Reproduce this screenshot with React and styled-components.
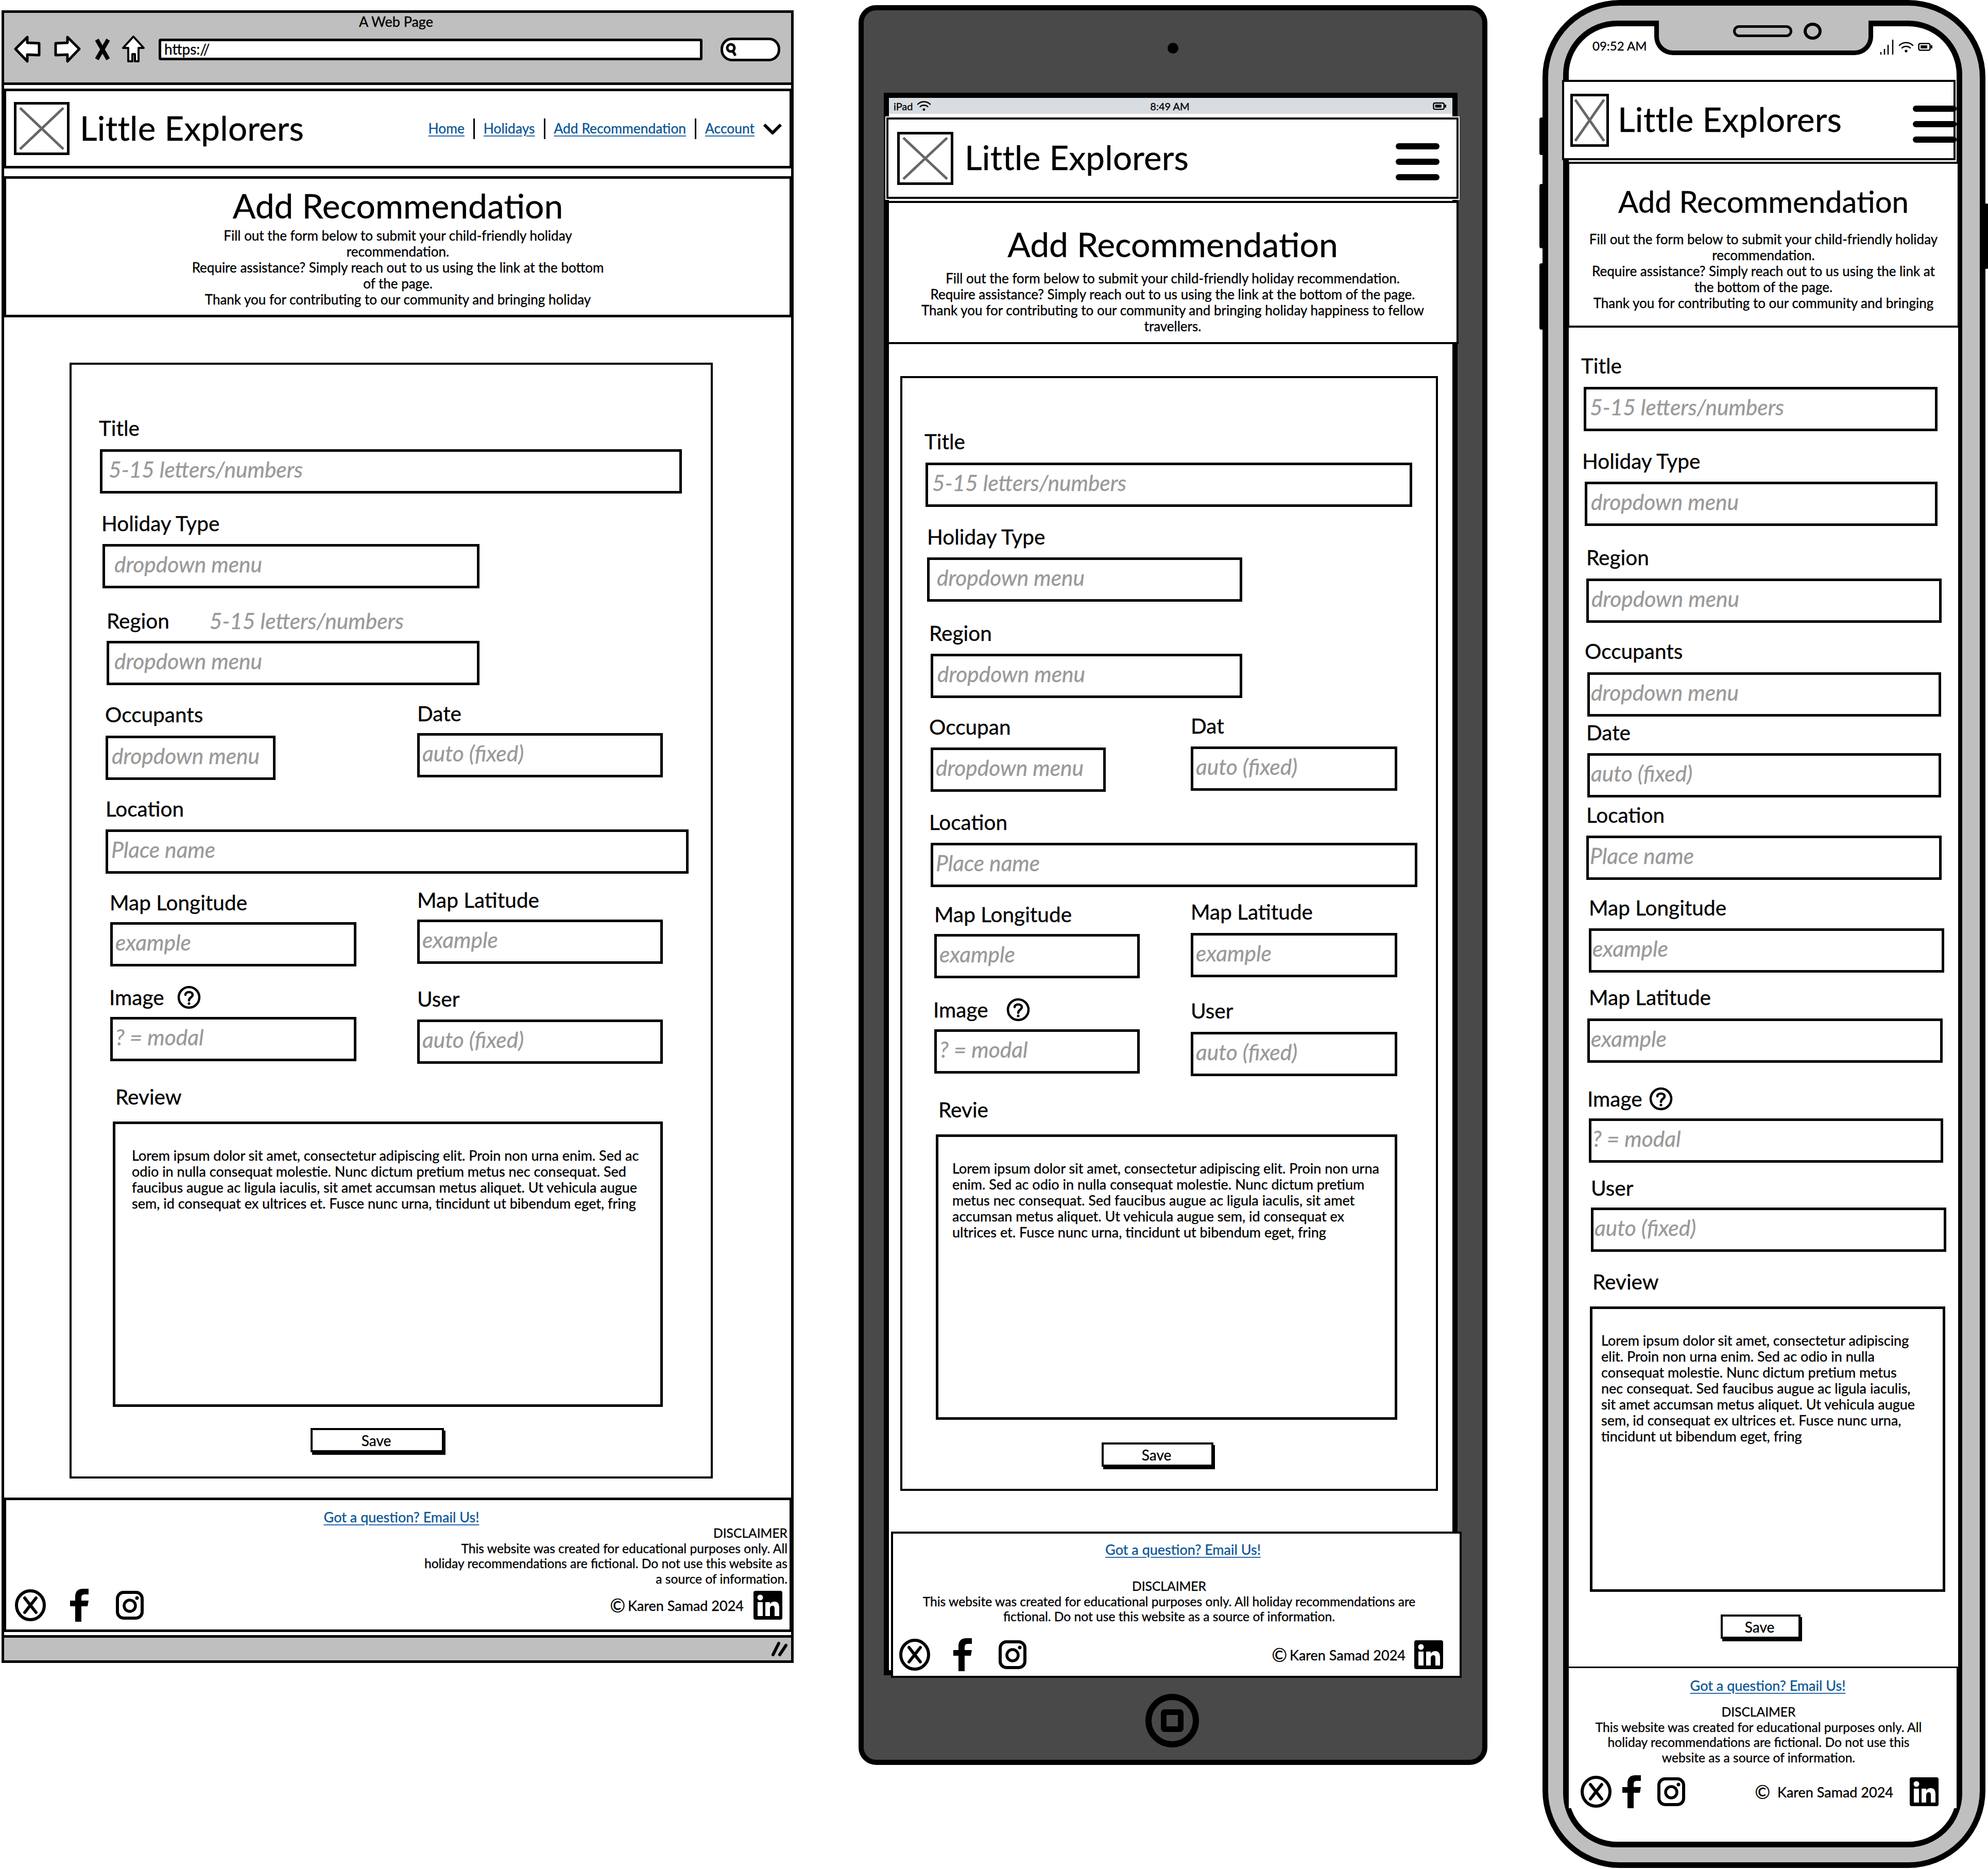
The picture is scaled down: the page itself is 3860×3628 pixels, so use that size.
import React from "react";
import styled, { createGlobalStyle } from "styled-components";

const GlobalStyle = createGlobalStyle`
  html, body { margin: 0; padding: 0; background: #fff; }
  body { font-family: "Lato", "Liberation Sans", sans-serif; color: #000; }
  * { box-sizing: border-box; }
`;

const Canvas = styled.div`
  display: flex;
  align-items: flex-start;
  width: 3860px;
  height: 3628px;
  background: #fff;
  overflow: hidden;
  -webkit-text-stroke: 0.35px;
`;

/* ---------- shared site parts ---------- */

const NavBar = styled.header`
  display: flex;
  align-items: center;
  position: relative;
  flex: none;
  width: ${(p) => p.$w}px;
  height: ${(p) => p.$h}px;
  margin: ${(p) => p.$m};
  padding-left: ${(p) => p.$pl}px;
  background: #fff;
  border: ${(p) => p.$bw}px solid #000;
  outline: ${(p) => (p.$halo ? "2px solid #fff" : "none")};
`;

const LogoBox = styled.svg`
  flex: none;
  width: ${(p) => p.$w}px;
  height: 103px;
  background: #fff;
  border: 5px solid #000;
`;

const Brand = styled.div`
  margin-left: ${(p) => p.$gap}px;
  padding-bottom: 4px;
  font-size: 65.5px;
  line-height: 70px;
  letter-spacing: 0.2px;
  white-space: nowrap;
`;

const NavLinks = styled.nav`
  display: flex;
  align-items: center;
  margin-left: auto;
  padding-right: 14px;
`;

const TextLink = styled.a`
  display: inline-block;
  color: #0b5596;
  font-size: ${(p) => p.$size || 27}px;
  line-height: 31px;
  text-decoration: underline;
  text-decoration-color: #2a6cad;
  text-underline-offset: 4px;
  white-space: nowrap;
`;

const Sep = styled.span`
  width: 3px;
  height: 40px;
  margin: 0 17px;
  background: #000;
`;

const Chevron = styled.svg`
  width: 38px;
  height: 22px;
  margin-left: 16px;
`;

const Burger = styled.div`
  display: flex;
  flex-direction: column;
  gap: 18px;
  margin: ${(p) => p.$mt}px ${(p) => p.$mr}px 0 auto;
`;

const BurgerBar = styled.span`
  display: block;
  width: 85px;
  height: 12px;
  border-radius: 6px;
  background: #000;
`;

const Hero = styled.section`
  position: relative;
  flex: none;
  width: ${(p) => p.$w}px;
  height: ${(p) => p.$h}px;
  margin: ${(p) => p.$m};
  padding-top: ${(p) => p.$pt}px;
  background: #fff;
  border: ${(p) => p.$bw}px solid #000;
  text-align: center;
  overflow: hidden;
`;

const HeroTitle = styled.h1`
  margin: 0 0 ${(p) => p.$mb}px;
  font-size: ${(p) => p.$size}px;
  font-weight: 400;
  line-height: 70px;
`;

const TextLine = styled.div`
  font-size: 26px;
  line-height: 31px;
  white-space: nowrap;
`;

const LoremLine = styled.div`
  font-size: 27px;
  line-height: 31px;
  white-space: nowrap;
`;

const FormCard = styled.form`
  position: relative;
  flex: none;
  width: ${(p) => p.$w}px;
  height: ${(p) => p.$h}px;
  margin: ${(p) => p.$m};
  border: 4px solid #000;
`;

const FormBody = styled.div`
  flex: none;
  width: ${(p) => p.$w}px;
  height: ${(p) => p.$h}px;
  margin: ${(p) => p.$m};
  background: #fff;
  border: 3px solid #000;
  border-top: none;
`;

const Row = styled.div`
  display: grid;
  grid-template-columns: ${(p) => (p.$col ? `${p.$col}px 1fr` : "1fr")};
  align-items: start;
  margin-top: ${(p) => p.$mt}px;
`;

const Field = styled.div`
  padding-top: ${(p) => p.$dy || 0}px;
`;

const Label = styled.label`
  display: flex;
  align-items: center;
  height: 48px;
  margin-left: ${(p) => p.$x}px;
  padding-bottom: 3px;
  font-size: 40.5px;
  white-space: nowrap;
`;

const Hint = styled.span`
  margin-left: ${(p) => p.$ml}px;
  color: #999;
  font-size: 42.5px;
  font-style: italic;
`;

const HelpIcon = styled.svg`
  width: 48px;
  height: 48px;
  margin-left: ${(p) => p.$ml}px;
`;

const InputBox = styled.div`
  width: ${(p) => p.$w}px;
  height: 86px;
  margin: ${(p) => p.$gap}px 0 0 ${(p) => p.$x}px;
  padding: 0 0 9px ${(p) => p.$pl}px;
  display: flex;
  align-items: center;
  border: 5px solid #000;
  color: #999;
  font-size: 42.5px;
  font-style: italic;
  white-space: nowrap;
`;

const TextArea = styled.div`
  width: ${(p) => p.$w}px;
  height: 554px;
  margin: ${(p) => p.$gap}px 0 0 ${(p) => p.$x}px;
  padding: 45px 0 0 ${(p) => p.$pl}px;
  border: 5px solid #000;
`;

const SaveButton = styled.button`
  display: block;
  width: ${(p) => p.$w}px;
  height: 47px;
  margin: ${(p) => p.$mt}px 0 0 ${(p) => p.$x}px;
  padding: 0 4px 0 0;
  background: #fff;
  border: 4px solid #000;
  box-shadow: 3px 5px 0 #000;
  color: #000;
  font-family: inherit;
  font-size: 28px;
  line-height: 30px;
`;

const Footer = styled.footer`
  position: relative;
  display: flex;
  flex-direction: column;
  flex: none;
  width: ${(p) => p.$w}px;
  height: ${(p) => p.$h}px;
  margin: ${(p) => p.$m};
  padding-top: ${(p) => p.$pt}px;
  background: #fff;
  border: ${(p) => p.$bw}px solid ${(p) => (p.$bw ? "#000" : "transparent")};
`;

const LinkRow = styled.div`
  height: 31px;
  padding-left: ${(p) => p.$shift}px;
  text-align: center;
`;

const Disclaimer = styled.div`
  margin-top: ${(p) => p.$mt}px;
  padding-right: ${(p) => p.$pr}px;
  text-align: ${(p) => p.$align};
`;

const DisclaimerLine = styled.div`
  font-size: 24.6px;
  line-height: 29.5px;
  white-space: nowrap;
`;

const SocialRow = styled.div`
  display: flex;
  align-items: center;
  margin-top: auto;
  padding: 0 ${(p) => p.$pr}px ${(p) => p.$pb}px ${(p) => p.$pl}px;
`;

const SocialIcon = styled.svg`
  flex: none;
  margin-left: ${(p) => p.$ml || 0}px;
`;

const Copy = styled.div`
  display: flex;
  align-items: center;
  gap: ${(p) => p.$gap}px;
  margin-left: auto;
  font-size: 27px;
  white-space: nowrap;
`;

const CopyMark = styled.span`
  font-size: 36px;
  line-height: 36px;
`;

/* ---------- browser frame ---------- */

const Browser = styled.div`
  flex: none;
  display: flex;
  flex-direction: column;
  width: 1538px;
  height: 3208px;
  margin: 20px 0 0 3px;
  border: 5px solid #000;
`;

const ChromeBar = styled.div`
  flex: none;
  height: 140px;
  padding: 2px 24px 0 18px;
  background: #bfbfbf;
  border-bottom: 5px solid #000;
`;

const PageTitle = styled.div`
  font-size: 27px;
  line-height: 30px;
  text-align: center;
`;

const ChromeTools = styled.div`
  display: flex;
  align-items: center;
  margin-top: 12px;
`;

const UrlField = styled.div`
  flex: none;
  width: 1056px;
  height: 42px;
  margin-left: 26px;
  padding-left: 6px;
  background: #fff;
  border: 5px solid #000;
  border-radius: 4px;
  font-size: 28px;
  line-height: 30px;
`;

const SearchPill = styled.div`
  flex: none;
  display: flex;
  align-items: center;
  width: 116px;
  height: 46px;
  margin-left: 35px;
  padding-left: 3px;
  background: #fff;
  border: 5px solid #000;
  border-radius: 22px;
`;

const ResizeBar = styled.div`
  flex: none;
  display: flex;
  align-items: center;
  justify-content: flex-end;
  height: 49px;
  margin-top: 6px;
  padding-right: 4px;
  background: #bfbfbf;
  border-top: 5px solid #000;
`;

/* ---------- tablet frame ---------- */

const Tablet = styled.div`
  flex: none;
  display: flex;
  flex-direction: column;
  align-items: center;
  width: 1221px;
  height: 3416px;
  margin: 10px 0 0 126px;
  padding-top: 63px;
  background: #494949;
  border: 10px solid #000;
  border-radius: 34px;
`;

const TabletCamera = styled.div`
  flex: none;
  width: 21px;
  height: 21px;
  border-radius: 50%;
  background: #000;
`;

const TabletScreen = styled.div`
  flex: none;
  position: relative;
  display: flex;
  flex-direction: column;
  align-self: flex-start;
  width: 1114px;
  height: 3072px;
  margin: 76px 0 0 39px;
  background: #fff;
  border: 10px solid #000;
`;

const IpadStatus = styled.div`
  flex: none;
  display: grid;
  grid-template-columns: 1fr auto 1fr;
  align-items: center;
  height: 31px;
  padding: 0 12px 0 9px;
  background: #d7dde0;
  font-size: 20px;
`;

const StatusSide = styled.div`
  display: flex;
  align-items: center;
  justify-content: ${(p) => (p.$end ? "flex-end" : "flex-start")};
  gap: 8px;
`;

const HomeButton = styled.div`
  flex: none;
  display: flex;
  align-items: center;
  justify-content: center;
  width: 104px;
  height: 104px;
  margin: 36px 4px 0 0;
  border: 12px solid #000;
  border-radius: 50%;
`;

const HomeSquare = styled.div`
  width: 44px;
  height: 44px;
  border: 11px solid #000;
  border-radius: 7px;
`;

/* ---------- phone frame ---------- */

const Phone = styled.div`
  flex: none;
  position: relative;
  width: 860px;
  height: 3626px;
  margin-left: 107px;
  padding: 29px 0 0 29px;
  background: #bfbfbf;
  border: 11px solid #000;
  border-radius: 150px;
`;

const SideKey = styled.span`
  position: absolute;
  ${(p) => (p.$right ? "right: -17px;" : "left: -17px;")}
  top: ${(p) => p.$top}px;
  width: 8px;
  height: ${(p) => p.$h}px;
  background: #000;
  border-radius: 4px;
`;

const PhoneScreen = styled.div`
  position: relative;
  display: flex;
  flex-direction: column;
  width: 775px;
  height: 3546px;
  background: #fff;
  border: 11px solid #000;
  border-radius: 105px;
`;

const Notch = styled.div`
  position: absolute;
  top: -11px;
  left: 166px;
  display: flex;
  align-items: center;
  justify-content: center;
  gap: 22px;
  width: 425px;
  height: 67px;
  padding: 0 0 18px 52px;
  background: #bfbfbf;
  border: 9px solid #000;
  border-top: none;
  border-radius: 0 0 36px 36px;
`;

const Speaker = styled.span`
  width: 115px;
  height: 23px;
  border: 5px solid #000;
  border-radius: 12px;
`;

const FrontCamera = styled.span`
  width: 35px;
  height: 33px;
  border: 6px solid #000;
  border-radius: 50%;
`;

const PhoneStatus = styled.div`
  flex: none;
  display: flex;
  align-items: flex-start;
  justify-content: space-between;
  height: 104px;
  padding: 24px 47px 0 46px;
  font-size: 24px;
  line-height: 28px;
`;

/* ---------- drawings ---------- */

const LogoMark = ({ w }) => (
  <LogoBox $w={w} viewBox="0 0 100 100" preserveAspectRatio="none">
    <path d="M7 7 L93 93 M93 7 L7 93" stroke="#666" strokeWidth="5" fill="none" vectorEffect="non-scaling-stroke" />
  </LogoBox>
);

const ArrowIcon = ({ flip, ml = 0 }) => (
  <svg width="54" height="54" viewBox="0 0 54 54" style={{ flex: "none", marginLeft: ml, transform: flip ? "scaleX(-1)" : "none" }}>
    <path d="M27 3 L4 26 L27 50 L27 37 L50 38 L50 15 L27 14 Z" fill="#fff" stroke="#000" strokeWidth="5" strokeLinejoin="round" />
  </svg>
);

const CloseMark = () => (
  <svg width="30" height="44" viewBox="0 0 30 44" style={{ flex: "none", marginLeft: 26 }}>
    <path d="M4 3 L26 41 M26 3 L4 41" stroke="#000" strokeWidth="8" fill="none" />
  </svg>
);

const HomeMark = () => (
  <svg width="46" height="54" viewBox="0 0 46 54" style={{ flex: "none", marginLeft: 22 }}>
    <path d="M23 2 L3 24 L13 24 L13 50 L21 50 L21 36 L26 36 L26 50 L33 50 L33 24 L43 24 Z" fill="#fff" stroke="#000" strokeWidth="4" strokeLinejoin="round" />
  </svg>
);

const XCircle = () => (
  <SocialIcon width="62" height="64" viewBox="0 0 62 64">
    <ellipse cx="31" cy="32" rx="27" ry="28" fill="none" stroke="#000" strokeWidth="6" />
    <path d="M20 18 L42 46 M42 18 L20 46" stroke="#000" strokeWidth="6" strokeLinecap="round" fill="none" />
  </SocialIcon>
);

const FacebookF = ({ ml }) => (
  <SocialIcon $ml={ml} width="36" height="64" viewBox="0 0 36 64">
    <path d="M10 64 V34 H0 V23 H10 V15 C10 5 16 0 25 0 H36 V11 H29 C24 11 22 13 22 17 V23 H36 L34 34 H22 V64 Z" fill="#000" />
  </SocialIcon>
);

const InstagramIcon = ({ ml }) => (
  <SocialIcon $ml={ml} width="54" height="56" viewBox="0 0 54 56">
    <rect x="3" y="3" width="48" height="50" rx="12" fill="none" stroke="#000" strokeWidth="6" />
    <circle cx="27" cy="29" r="11" fill="none" stroke="#000" strokeWidth="5.5" />
    <circle cx="41" cy="14" r="3.5" fill="#000" />
  </SocialIcon>
);

const LinkedInIcon = ({ ml }) => (
  <SocialIcon $ml={ml} width="56" height="56" viewBox="0 0 56 56">
    <rect width="56" height="56" rx="4" fill="#000" />
    <circle cx="13" cy="13" r="5.5" fill="#fff" />
    <rect x="8" y="22" width="10" height="27" fill="#fff" />
    <path d="M23 22 H32 V26 C34 22 38 21 41 21 C48 21 50 26 50 33 V49 H41 V35 C41 31 40 29 37 29 C33 29 32 32 32 36 V49 H23 Z" fill="#fff" />
  </SocialIcon>
);

const QuestionIcon = ({ ml }) => (
  <HelpIcon $ml={ml} viewBox="0 0 48 48">
    <circle cx="24" cy="24" r="20" fill="none" stroke="#000" strokeWidth="4.5" />
    <path d="M17 19 C17 12 31 12 31 19 C31 24 24 24 24 30" fill="none" stroke="#000" strokeWidth="4.5" strokeLinecap="round" />
    <circle cx="24" cy="36" r="2.6" fill="#000" />
  </HelpIcon>
);

const WifiIcon = ({ s = 30 }) => (
  <svg width={s} height={s * 0.8} viewBox="0 0 30 24">
    <path d="M2 9 C9 2 21 2 28 9 M7 14 C11 10 19 10 23 14" fill="none" stroke="#000" strokeWidth="2.5" strokeLinecap="round" />
    <circle cx="15" cy="20" r="2.6" fill="#000" />
  </svg>
);

const BatteryIcon = ({ w = 28, h = 16 }) => (
  <svg width={w} height={h} viewBox="0 0 28 16">
    <rect x="1.5" y="1.5" width="22" height="13" rx="3" fill="none" stroke="#000" strokeWidth="2.5" />
    <rect x="5" y="5" width="13" height="6" fill="#000" />
    <rect x="25" y="5" width="3" height="6" fill="#000" />
  </svg>
);

const SignalIcon = () => (
  <svg width="28" height="32" viewBox="0 0 28 32">
    <path d="M2 31 V26 M9 31 V20 M16 31 V12 M25 31 V2" stroke="#000" strokeWidth="2.5" />
  </svg>
);

/* ---------- page data ---------- */

const INTRO = {
  desktop: [
    "Fill out the form below to submit your child-friendly holiday",
    "recommendation.",
    "Require assistance? Simply reach out to us using the link at the bottom",
    "of the page.",
    "Thank you for contributing to our community and bringing holiday",
  ],
  tablet: [
    "Fill out the form below to submit your child-friendly holiday recommendation.",
    "Require assistance? Simply reach out to us using the link at the bottom of the page.",
    "Thank you for contributing to our community and bringing holiday happiness to fellow",
    "travellers.",
  ],
  phone: [
    "Fill out the form below to submit your child-friendly holiday",
    "recommendation.",
    "Require assistance? Simply reach out to us using the link at",
    "the bottom of the page.",
    "Thank you for contributing to our community and bringing",
  ],
};

const LOREM = {
  desktop: [
    "Lorem ipsum dolor sit amet, consectetur adipiscing elit. Proin non urna enim. Sed ac",
    "odio in nulla consequat molestie. Nunc dictum pretium metus nec consequat. Sed",
    "faucibus augue ac ligula iaculis, sit amet accumsan metus aliquet. Ut vehicula augue",
    "sem, id consequat ex ultrices et. Fusce nunc urna, tincidunt ut bibendum eget, fring",
  ],
  tablet: [
    "Lorem ipsum dolor sit amet, consectetur adipiscing elit. Proin non urna",
    "enim. Sed ac odio in nulla consequat molestie. Nunc dictum pretium",
    "metus nec consequat. Sed faucibus augue ac ligula iaculis, sit amet",
    "accumsan metus aliquet. Ut vehicula augue sem, id consequat ex",
    "ultrices et. Fusce nunc urna, tincidunt ut bibendum eget, fring",
  ],
  phone: [
    "Lorem ipsum dolor sit amet, consectetur adipiscing",
    "elit. Proin non urna enim. Sed ac odio in nulla",
    "consequat molestie. Nunc dictum pretium metus",
    "nec consequat. Sed faucibus augue ac ligula iaculis,",
    "sit amet accumsan metus aliquet. Ut vehicula augue",
    "sem, id consequat ex ultrices et. Fusce nunc urna,",
    "tincidunt ut bibendum eget, fring",
  ],
};

const DISCLAIMER = {
  desktop: [
    "DISCLAIMER",
    "This website was created for educational purposes only. All",
    "holiday recommendations are fictional. Do not use this website as",
    "a source of information.",
  ],
  tablet: [
    "DISCLAIMER",
    "This website was created for educational purposes only. All holiday recommendations are",
    "fictional. Do not use this website as a source of information.",
  ],
  phone: [
    "DISCLAIMER",
    "This website was created for educational purposes only. All",
    "holiday recommendations are fictional. Do not use this",
    "website as a source of information.",
  ],
};

const TITLE_PH = "5-15 letters/numbers";
const MENU_PH = "dropdown menu";
const AUTO_PH = "auto (fixed)";

// each row: mt = space above, col = start of second column, fields with label x (lx), input x, width, gap
const FORMS = {
  desktop: {
    rows: [
      { mt: 100, fields: [{ label: "Title", lx: 53, x: 55, w: 1130, gap: 16, ph: TITLE_PH, pl: 12 }] },
      { mt: 35, fields: [{ label: "Holiday Type", lx: 58, x: 60, w: 732, gap: 15, ph: MENU_PH, pl: 18 }] },
      { mt: 40, fields: [{ label: "Region", lx: 68, x: 68, w: 724, gap: 14, ph: MENU_PH, pl: 10, hint: TITLE_PH, hintMl: 78 }] },
      { mt: 32, col: 671, fields: [
        { label: "Occupants", lx: 65, x: 66, w: 330, gap: 16, dy: 2, ph: MENU_PH, pl: 7 },
        { label: "Date", lx: 0, x: 0, w: 477, gap: 13, ph: AUTO_PH, pl: 5 },
      ] },
      { mt: 33, fields: [{ label: "Location", lx: 66, x: 66, w: 1132, gap: 15, ph: "Place name", pl: 6 }] },
      { mt: 28, col: 671, fields: [
        { label: "Map Longitude", lx: 74, x: 75, w: 478, gap: 13, dy: 5, ph: "example", pl: 5 },
        { label: "Map Latitude", lx: 0, x: 0, w: 477, gap: 13, ph: "example", pl: 5 },
      ] },
      { mt: 37, col: 671, fields: [
        { label: "Image", lx: 73, x: 75, w: 478, gap: 13, ph: "? = modal", pl: 5, help: 24 },
        { label: "User", lx: 0, x: 0, w: 477, gap: 15, dy: 3, ph: AUTO_PH, pl: 5 },
      ] },
    ],
    review: { label: "Review", lx: 85, x: 80, w: 1068, mt: 41, pl: 32 },
    save: { x: 464, w: 259, mt: 41 },
  },
  tablet: {
    rows: [
      { mt: 100, fields: [{ label: "Title", lx: 43, x: 45, w: 945, gap: 16, ph: TITLE_PH, pl: 8 }] },
      { mt: 35, fields: [{ label: "Holiday Type", lx: 48, x: 48, w: 612, gap: 15, ph: MENU_PH, pl: 14 }] },
      { mt: 38, fields: [{ label: "Region", lx: 52, x: 55, w: 605, gap: 15, ph: MENU_PH, pl: 8 }] },
      { mt: 31, col: 560, fields: [
        { label: "Occupan", lx: 52, x: 55, w: 340, gap: 15, dy: 2, ph: MENU_PH, pl: 5 },
        { label: "Dat", lx: 0, x: 0, w: 401, gap: 15, ph: AUTO_PH, pl: 5 },
      ] },
      { mt: 36, fields: [{ label: "Location", lx: 52, x: 55, w: 945, gap: 15, ph: "Place name", pl: 5 }] },
      { mt: 25, col: 560, fields: [
        { label: "Map Longitude", lx: 62, x: 62, w: 399, gap: 13, dy: 5, ph: "example", pl: 5 },
        { label: "Map Latitude", lx: 0, x: 0, w: 401, gap: 16, ph: "example", pl: 5 },
      ] },
      { mt: 38, col: 560, fields: [
        { label: "Image", lx: 60, x: 62, w: 399, gap: 13, ph: "? = modal", pl: 5, help: 34 },
        { label: "User", lx: 0, x: 0, w: 401, gap: 16, dy: 2, ph: AUTO_PH, pl: 5 },
      ] },
    ],
    review: { label: "Revie", lx: 70, x: 65, w: 896, mt: 42, pl: 27 },
    save: { x: 387, w: 217, mt: 44 },
  },
  phone: {
    rows: [
      { mt: 51, fields: [{ label: "Title", lx: 24, x: 29, w: 687, gap: 16, ph: TITLE_PH, pl: 7 }] },
      { mt: 35, fields: [{ label: "Holiday Type", lx: 26, x: 31, w: 685, gap: 15, ph: MENU_PH, pl: 7 }] },
      { mt: 38, fields: [{ label: "Region", lx: 34, x: 34, w: 690, gap: 16, ph: MENU_PH, pl: 5 }] },
      { mt: 32, fields: [{ label: "Occupants", lx: 31, x: 36, w: 687, gap: 16, ph: MENU_PH, pl: 2 }] },
      { mt: 8, fields: [{ label: "Date", lx: 34, x: 36, w: 687, gap: 15, ph: AUTO_PH, pl: 2 }] },
      { mt: 11, fields: [{ label: "Location", lx: 34, x: 34, w: 690, gap: 15, ph: "Place name", pl: 2 }] },
      { mt: 31, fields: [{ label: "Map Longitude", lx: 39, x: 39, w: 690, gap: 15, ph: "example", pl: 2 }] },
      { mt: 25, fields: [{ label: "Map Latitude", lx: 39, x: 36, w: 690, gap: 16, ph: "example", pl: 2 }] },
      { mt: 47, fields: [{ label: "Image", lx: 36, x: 39, w: 688, gap: 13, ph: "? = modal", pl: 2, help: 12 }] },
      { mt: 26, fields: [{ label: "User", lx: 43, x: 43, w: 690, gap: 13, ph: AUTO_PH, pl: 2 }] },
    ],
    review: { label: "Review", lx: 46, x: 41, w: 690, mt: 35, pl: 17 },
    save: { x: 295, w: 155, mt: 44 },
  },
};

const FormFields = ({ kind }) => {
  const form = FORMS[kind];
  return (
    <>
      {form.rows.map((row) => (
        <Row key={row.fields[0].label} $mt={row.mt} $col={row.col}>
          {row.fields.map((f) => (
            <Field key={f.label} $dy={f.dy}>
              <Label $x={f.lx}>
                {f.label}
                {f.help ? <QuestionIcon ml={f.help} /> : null}
                {f.hint ? <Hint $ml={f.hintMl}>{f.hint}</Hint> : null}
              </Label>
              <InputBox $x={f.x} $w={f.w} $gap={f.gap} $pl={f.pl}>{f.ph}</InputBox>
            </Field>
          ))}
        </Row>
      ))}
      <Row $mt={form.review.mt}>
        <Field>
          <Label $x={form.review.lx}>{form.review.label}</Label>
          <TextArea $x={form.review.x} $w={form.review.w} $gap={23} $pl={form.review.pl}>
            {LOREM[kind].map((line) => <LoremLine key={line}>{line}</LoremLine>)}
          </TextArea>
        </Field>
      </Row>
      <SaveButton type="button" $x={form.save.x} $w={form.save.w} $mt={form.save.mt}>Save</SaveButton>
    </>
  );
};

const SiteFooter = ({ kind, frame, shift, disc, social }) => (
  <Footer {...frame}>
    <LinkRow $shift={shift}><TextLink>Got a question? Email Us!</TextLink></LinkRow>
    <Disclaimer $mt={disc.mt} $pr={disc.pr} $align={disc.align}>
      {DISCLAIMER[kind].map((line) => <DisclaimerLine key={line}>{line}</DisclaimerLine>)}
    </Disclaimer>
    <SocialRow $pl={social.pl} $pr={social.pr} $pb={social.pb}>
      <XCircle />
      <FacebookF ml={social.g1} />
      <InstagramIcon ml={social.g2} />
      <Copy $gap={social.copyGap}>
        <CopyMark>©</CopyMark>
        <span>Karen Samad 2024</span>
        <LinkedInIcon ml={social.inGap} />
      </Copy>
    </SocialRow>
  </Footer>
);

const Intro = ({ kind }) => INTRO[kind].map((line) => <TextLine key={line}>{line}</TextLine>);

const App = () => (
  <>
    <GlobalStyle />
    <Canvas>
      <Browser>
        <ChromeBar>
          <PageTitle>A Web Page</PageTitle>
          <ChromeTools>
            <ArrowIcon />
            <ArrowIcon flip ml={24} />
            <CloseMark />
            <HomeMark />
            <UrlField>https://</UrlField>
            <SearchPill>
              <svg width="26" height="30" viewBox="0 0 26 30">
                <circle cx="12" cy="12" r="7" fill="none" stroke="#000" strokeWidth="5" />
                <path d="M16 18 L21 27" stroke="#000" strokeWidth="5" />
              </svg>
            </SearchPill>
          </ChromeTools>
        </ChromeBar>
        <NavBar $w={1531} $h={155} $m="7px 0 0 -1px" $pl={15} $bw={5}>
          <LogoMark w={108} />
          <Brand $gap={20}>Little Explorers</Brand>
          <NavLinks>
            <TextLink $size={26.4}>Home</TextLink>
            <Sep />
            <TextLink $size={26.4}>Holidays</TextLink>
            <Sep />
            <TextLink $size={26.4}>Add Recommendation</TextLink>
            <Sep />
            <TextLink $size={26.4}>Account</TextLink>
            <Chevron viewBox="0 0 38 22">
              <path d="M3 3 L19 19 L35 3" fill="none" stroke="#000" strokeWidth="6" />
            </Chevron>
          </NavLinks>
        </NavBar>
        <Hero $w={1531} $h={274} $m="15px 0 0 -1px" $pt={17} $bw={5}>
          <HeroTitle $size={66} $mb={8}>Add Recommendation</HeroTitle>
          <Intro kind="desktop" />
        </Hero>
        <FormCard $w={1249} $h={2166} $m="88px 0 0 127px">
          <FormFields kind="desktop" />
        </FormCard>
        <SiteFooter
          kind="desktop"
          frame={{ $w: 1531, $h: 261, $m: "37px 0 0 -1px", $pt: 17, $bw: 5 }}
          shift={14}
          disc={{ mt: 1, pr: 4, align: "right" }}
          social={{ pl: 16, pr: 14, pb: 15, g1: 46, g2: 53, copyGap: 5, inGap: 14 }}
        />
        <ResizeBar>
          <svg width="34" height="30" viewBox="0 0 34 30">
            <path d="M3 26 L14 4 M16 26 L28 8" stroke="#000" strokeWidth="6" strokeLinecap="round" />
          </svg>
        </ResizeBar>
      </Browser>

      <Tablet>
        <TabletCamera />
        <TabletScreen>
          <IpadStatus>
            <StatusSide>iPad <WifiIcon s={28} /></StatusSide>
            <span>8:49 AM</span>
            <StatusSide $end><BatteryIcon w={26} h={18} /></StatusSide>
          </IpadStatus>
          <NavBar $w={1111} $h={158} $m="7px 0 0 -5px" $pl={17} $bw={4} $halo>
            <LogoMark w={109} />
            <Brand $gap={22}>Little Explorers</Brand>
            <Burger $mr={33} $mt={14}>
              <BurgerBar /><BurgerBar /><BurgerBar />
            </Burger>
          </NavBar>
          <Hero $w={1110} $h={278} $m="4px 0 0 -4px" $pt={45} $bw={4}>
            <HeroTitle $size={66} $mb={16}>Add Recommendation</HeroTitle>
            <Intro kind="tablet" />
          </Hero>
          <FormCard $w={1044} $h={2164} $m="62px 0 0 22px">
            <FormFields kind="tablet" />
          </FormCard>
          <SiteFooter
            kind="tablet"
            frame={{ $w: 1108, $h: 284, $m: "79px 0 0 4px", $pt: 15, $bw: 4 }}
            shift={26}
            disc={{ mt: 41, pr: 28, align: "center" }}
            social={{ pl: 11, pr: 32, pb: 9, g1: 44, g2: 52, copyGap: 5, inGap: 12 }}
          />
        </TabletScreen>
        <HomeButton><HomeSquare /></HomeButton>
      </Tablet>

      <Phone>
        <SideKey $top={217} $h={73} />
        <SideKey $top={346} $h={125} />
        <SideKey $top={500} $h={129} />
        <SideKey $right $top={384} $h={127} />
        <PhoneScreen>
          <Notch><Speaker /><FrontCamera /></Notch>
          <PhoneStatus>
            <span>09:52 AM</span>
            <StatusSide>
              <SignalIcon />
              <WifiIcon s={30} />
              <BatteryIcon />
            </StatusSide>
          </PhoneStatus>
          <NavBar $w={764} $h={156} $m="0 0 0 -13px" $pl={12} $bw={4}>
            <LogoMark w={75} />
            <Brand $gap={17}>Little Explorers</Brand>
            <Burger $mr={-6} $mt={16}>
              <BurgerBar /><BurgerBar /><BurgerBar />
            </Burger>
          </NavBar>
          <Hero $w={762} $h={322} $m="3px 0 0 -3px" $pt={38} $bw={4}>
            <HeroTitle $size={58} $mb={23}>Add Recommendation</HeroTitle>
            <Intro kind="phone" />
          </Hero>
          <FormBody $w={762} $h={2602} $m="0 0 0 -3px">
            <FormFields kind="phone" />
          </FormBody>
          <SiteFooter
            kind="phone"
            frame={{ $w: 753, $h: 272, $m: "0", $pt: 18, $bw: 0 }}
            shift={20}
            disc={{ mt: 21, pr: 16, align: "center" }}
            social={{ pl: 22, pr: 35, pb: 0, g1: 20, g2: 32, copyGap: 14, inGap: 18 }}
          />
        </PhoneScreen>
      </Phone>
    </Canvas>
  </>
);

export default App;
